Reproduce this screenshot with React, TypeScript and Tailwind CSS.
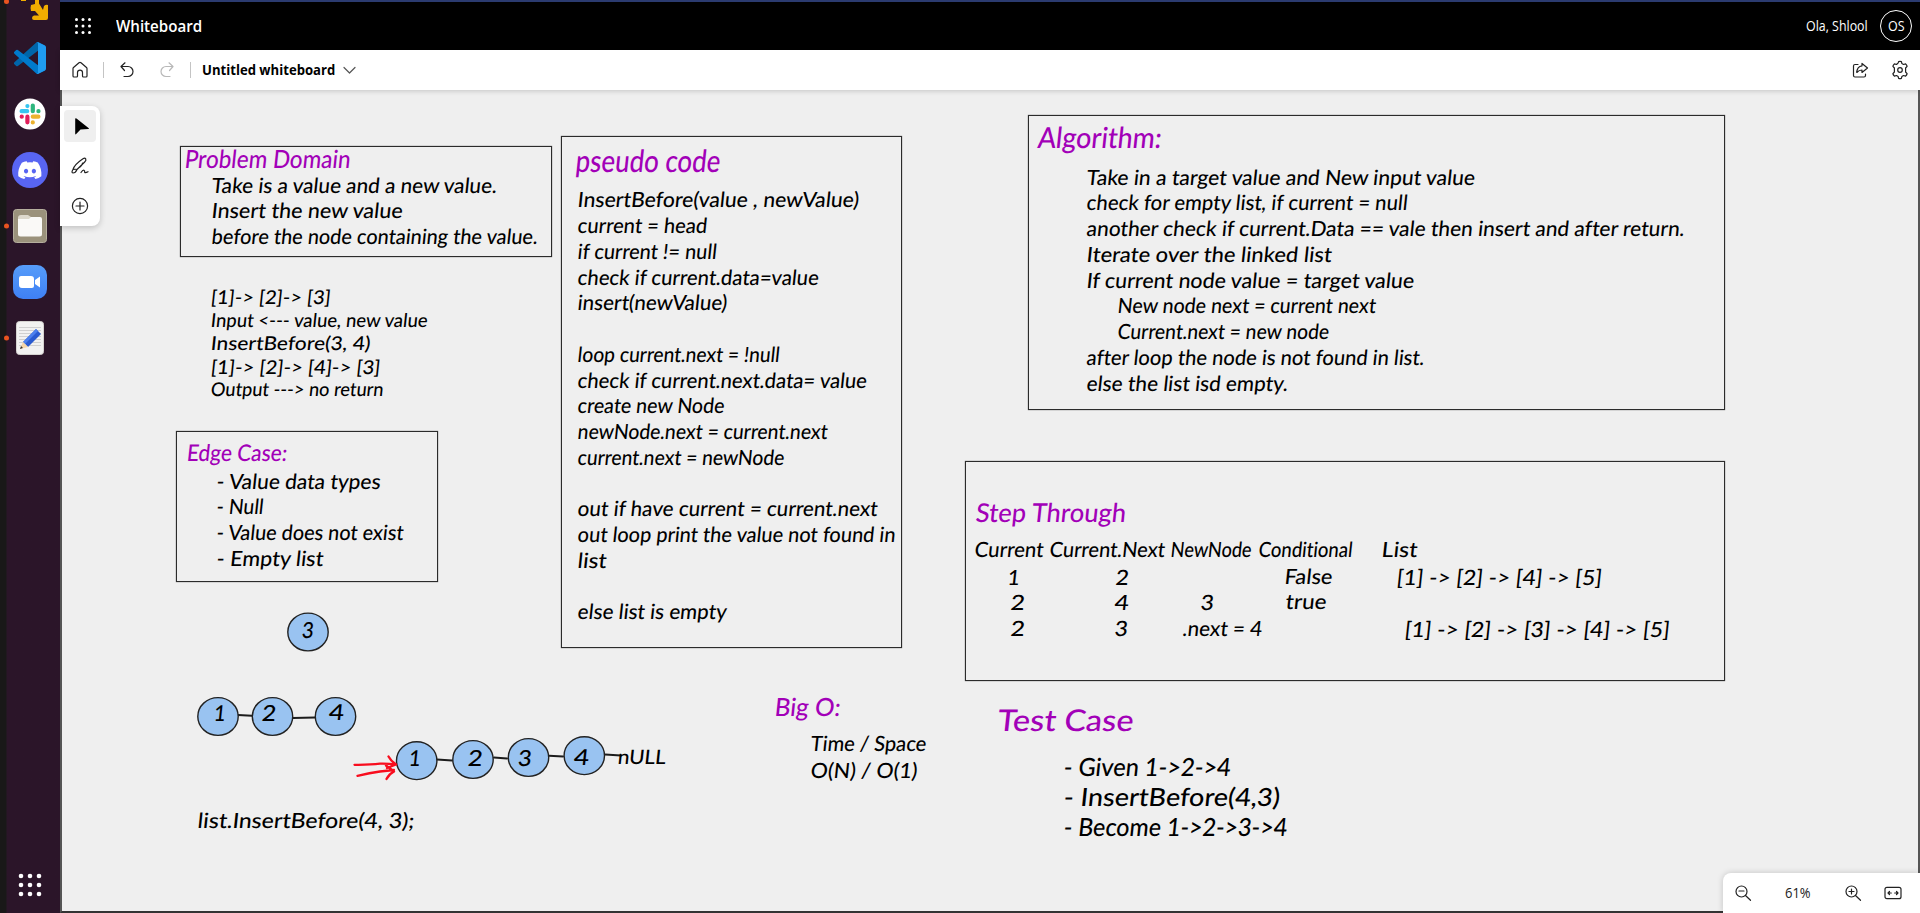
import React, { useLayoutEffect, useRef, useState } from "react";

type FitProps = { text: string; width: number; className?: string };

/* Text stretched horizontally so that it fills an exact width. */
function Fit({ text, width, className = "" }: FitProps) {
  const ref = useRef<HTMLSpanElement>(null);
  const [scale, setScale] = useState(1);
  useLayoutEffect(() => {
    if (ref.current) setScale(width / ref.current.offsetWidth);
  }, [text, width]);
  return (
    <span className={"block " + className} style={{ width }}>
      <span ref={ref} className="inline-block origin-left whitespace-pre" style={{ transform: `scaleX(${scale})` }}>
        {text}
      </span>
    </span>
  );
}

type Note = [text: string, left: number, right: number, baseline: number, size?: number];

const titles: Note[] = [
  ["Problem Domain", 184.5, 350, 168, 25],
  ["pseudo code", 576, 721, 173, 31],
  ["Algorithm:", 1038, 1162, 148.3, 29],
  ["Edge Case:", 187, 287, 461.5, 23],
  ["Step Through", 976, 1126, 522.5, 26],
  ["Big O:", 775, 841, 715.5, 25],
  ["Test Case", 998, 1133.5, 731, 30],
];

const notes: Note[] = [
  ["Take is a value and a new value.", 212, 497, 193],
  ["Insert the new value", 212, 403, 218],
  ["before the node containing the value.", 212, 538, 243.5],
  ["[1]-> [2]-> [3]", 211, 331, 305, 19],
  ["Input <--- value, new value", 211, 428, 328, 19],
  ["InsertBefore(3, 4)", 211, 370, 351, 19],
  ["[1]-> [2]-> [4]-> [3]", 211, 381, 375, 19],
  ["Output ---> no return", 211, 384, 397, 19],
  ["- Value data types", 217, 381, 489],
  ["- Null", 217, 264, 514],
  ["- Value does not exist", 217, 404, 540],
  ["- Empty list", 217, 323.5, 566],
  ["InsertBefore(value , newValue)", 577.5, 859, 207],
  ["current = head", 577.5, 707, 233],
  ["if current != null", 577.5, 717, 259],
  ["check if current.data=value", 577.5, 818.5, 285],
  ["insert(newValue)", 577.5, 727, 310],
  ["loop current.next = !null", 577.5, 779.5, 361.5],
  ["check if current.next.data= value", 577.5, 867, 387.5],
  ["create new Node", 577.5, 724.5, 413],
  ["newNode.next = current.next", 577.5, 827, 439],
  ["current.next = newNode", 577.5, 784.5, 465],
  ["out if have current = current.next", 577.5, 877.5, 516],
  ["out loop print the value not found in", 577.5, 895, 542],
  ["list", 577.5, 606.5, 568],
  ["else list is empty", 577.5, 726.5, 619],
  ["Take in a target value and New input value", 1087, 1475.5, 185],
  ["check for empty list, if current = null", 1086.5, 1407.5, 210],
  ["another check if current.Data == vale then insert and after return.", 1086.5, 1684, 236],
  ["Iterate over the linked list", 1086.5, 1331.5, 262],
  ["If current node value = target value", 1086.5, 1413.5, 288],
  ["New node next = current next", 1117.5, 1375.5, 313],
  ["Current.next = new node", 1117.5, 1328.5, 339],
  ["after loop the node is not found in list.", 1086.5, 1424, 365],
  ["else the list isd empty.", 1086.5, 1288, 391],
  ["Current", 975, 1044, 557],
  ["Current.Next", 1049.5, 1165, 557],
  ["NewNode", 1171, 1252, 557],
  ["Conditional", 1258.5, 1352, 557],
  ["List", 1382, 1418, 557],
  ["1", 1008, 1020, 584.5],
  ["2", 1116, 1129, 584.5],
  ["False", 1284.5, 1332, 583.5],
  ["[1] -> [2] -> [4] -> [5]", 1397, 1602, 584.5],
  ["2", 1011, 1025, 610],
  ["4", 1115, 1129, 610],
  ["3", 1201, 1214, 610],
  ["true", 1286, 1326.5, 609],
  ["2", 1011, 1025, 636],
  ["3", 1115, 1128, 636],
  [".next = 4", 1182.5, 1262, 635.5],
  ["[1] -> [2] -> [3] -> [4] -> [5]", 1405, 1670, 636.5],
  ["Time / Space", 811, 927, 751],
  ["O(N) / O(1)", 811, 918, 778],
  ["- Given 1->2->4", 1064, 1231, 776, 25],
  ["- InsertBefore(4,3)", 1064, 1280.5, 806, 25],
  ["- Become 1->2->3->4", 1064, 1287, 836, 25],
  ["list.InsertBefore(4, 3);", 198, 414.5, 828],
  ["nULL", 618, 666, 764, 20],
  ["3", 302, 314, 638.5, 22],
  ["1", 214, 226, 721.5, 22],
  ["2", 261.5, 276, 722, 22],
  ["4", 328.5, 344, 721, 22],
  ["1", 409, 421, 766.5, 22],
  ["2", 467.5, 482.5, 766.5, 22],
  ["3", 518, 532, 766.5, 22],
  ["4", 573.5, 589, 765.5, 22],
];

const boxes = [
  [180, 146, 372, 111],
  [561, 136, 341, 512],
  [1028, 115, 697, 295],
  [176, 431, 262, 151],
  [965, 461, 760, 220],
];

const nodes = [
  [308, 632], [218, 716.5], [272.5, 716.5], [335.5, 716.5],
  [416.7, 760.7], [473, 759.5], [528.5, 757.5], [584.3, 755.7],
];

function InkText({ note, color }: { note: Note; color: string }) {
  const [text, left, right, baseline, size = 21] = note;
  /* With a line height of 1.2 the baseline falls just under one em below the top. */
  return (
    <div
      className={"absolute -skew-x-6 leading-[1.2] font-medium [font-variant-ligatures:none] " + color}
      style={{ left, top: baseline - size * 0.987, fontSize: size }}
    >
      <Fit text={text} width={right - left} />
    </div>
  );
}

function Board() {
  return (
    <div className="absolute inset-0 font-['Lato',sans-serif]">
      {boxes.map(([left, top, width, height]) => (
        <div key={left} className="absolute border border-[#2b2b2b] shadow-[0_0_1px_#555]" style={{ left, top, width, height }} />
      ))}
      <svg className="absolute top-0 left-0" width="1920" height="913" fill="none">
        <g stroke="#1c1c1c" strokeWidth="2" strokeLinecap="round">
          <path d="M238 715l14 .7M293 718l22-.6M437 759.5l15 1M494 757.6l13 .9M549 755.7l14 .8M605 754.5l16 1" />
        </g>
        {nodes.map(([x, y]) => (
          <ellipse key={x} cx={x} cy={y} rx="20.2" ry="18.9" fill="#99c3f1" stroke="#222" strokeWidth="1.4" />
        ))}
        <path
          d="M354.5 764.8Q370 765 380 763.7Q388 763.5 396 764.5M388.5 756.5Q391 761 396 764.5L387 768M357.5 775.8Q370 773 380 771.5L394 770M386 765.5L394 771.5Q389 774 386.5 779"
          stroke="#f80d1e" strokeWidth="2.3" strokeLinecap="round" strokeLinejoin="round"
        />
      </svg>
      {titles.map((n) => <InkText key={n[0]} note={n} color="text-[#a200b8]" />)}
      {notes.map((n, i) => <InkText key={i} note={n} color="text-black" />)}
    </div>
  );
}

function Dot() {
  return <i className="absolute top-1/2 left-[4px] size-[5px] -translate-y-1/2 rounded-full bg-[#e95420]" />;
}

function Slot({ open, children }: { open?: boolean; children: React.ReactNode }) {
  return (
    <div className="relative flex h-14 w-[60px] shrink-0 items-center justify-center">
      {open && <Dot />}
      {children}
    </div>
  );
}

function Dock() {
  return (
    <aside className="flex h-[913px] w-[60px] shrink-0 flex-col bg-linear-to-r from-[#191818] from-[6px] to-[#2b1529] to-[7px]">
      <div className="relative h-[30px] w-[60px] overflow-hidden">
        <i className="absolute -top-[1px] left-[4px] size-[5px] rounded-full bg-[#e95420]" />
        <svg className="absolute top-0 left-0" width="60" height="30">
          <path d="M21 0h5v1h-5zM35 0h4v3.500L43 10l1-4q2-2 4-1v13q0 2-2 2H34q-2 0-2-2t2-2.500h5L35 11h-4q-1-3 0-6l4-1z" fill="#f0ad00" />
        </svg>
      </div>
      <Slot>
        <svg width="32" height="32" viewBox="0 0 100 100">
          <path d="M96.5 10.8 75.9.9a6.2 6.2 0 0 0-7.1 1.2L1.3 63.6a4.2 4.2 0 0 0 0 6.1l5.5 5a4.2 4.2 0 0 0 5.3.3L93.4 13.4c2.7-2.1 6.6-.1 6.6 3.3v-.2a6.3 6.3 0 0 0-3.5-5.7z" fill="#0065a9" />
          <path d="m96.5 89.2-20.6 9.9a6.2 6.2 0 0 1-7.1-1.2L1.3 36.4a4.2 4.2 0 0 1 0-6.1l5.5-5a4.2 4.2 0 0 1 5.3-.3l81.3 61.6c2.7 2.1 6.6.1 6.6-3.3v.2a6.3 6.3 0 0 1-3.5 5.7z" fill="#007acc" />
          <path d="M75.9 99.1a6.2 6.2 0 0 1-7.1-1.2c2.3 2.3 6.2.7 6.2-2.6V4.7c0-3.3-3.9-4.9-6.2-2.6A6.2 6.2 0 0 1 75.9.9l20.6 9.9a6.3 6.3 0 0 1 3.5 5.7v67a6.3 6.3 0 0 1-3.5 5.7z" fill="#1f9cf0" />
        </svg>
      </Slot>
      <Slot>
        <svg width="32" height="32" viewBox="0 0 32 32">
          <circle cx="16" cy="16" r="15.5" fill="#fff" />
          <g strokeWidth="4.2" strokeLinecap="round">
            <path d="M13.4 8v.1M7.6 13.2h5.6" stroke="#36c5f0" />
            <path d="M18.8 7.6v5.6M24.4 13.2h.1" stroke="#2eb67d" />
            <path d="M18.8 18.7h5.6M18.8 24.4v.1" stroke="#ecb22e" />
            <path d="M13.4 18.7v5.6M7.7 18.7h.1" stroke="#e01e5a" />
          </g>
        </svg>
      </Slot>
      <Slot>
        <svg width="36" height="36" viewBox="0 0 36 36">
          <circle cx="18" cy="18" r="18" fill="#5865f2" />
          <path transform="translate(6.2 6.4) scale(.98)" d="M20.317 4.37a19.8 19.8 0 0 0-4.885-1.515.07.07 0 0 0-.079.037c-.21.375-.444.864-.608 1.25a18.3 18.3 0 0 0-5.487 0 12.6 12.6 0 0 0-.617-1.25.08.08 0 0 0-.079-.037A19.7 19.7 0 0 0 3.677 4.37C.533 9.046-.32 13.58.099 18.057a.08.08 0 0 0 .031.057 19.9 19.9 0 0 0 5.993 3.03 14 14 0 0 0 1.226-1.994 13 13 0 0 1-1.872-.892l.37-.292c3.93 1.79 8.18 1.79 12.06 0l.37.292a12 12 0 0 1-1.873.892c.36.698.772 1.362 1.225 1.993a19.8 19.8 0 0 0 6.002-3.03c.5-5.177-.838-9.674-3.549-13.66zM8.02 15.33c-1.183 0-2.157-1.085-2.157-2.419s.956-2.419 2.157-2.419 2.176 1.096 2.157 2.42c0 1.333-.956 2.418-2.157 2.418zm7.975 0c-1.183 0-2.157-1.085-2.157-2.419s.955-2.419 2.157-2.419 2.176 1.096 2.157 2.42c0 1.333-.946 2.418-2.157 2.418z" fill="#fff" />
        </svg>
      </Slot>
      <Slot open>
        <svg width="34" height="34" viewBox="0 0 34 34">
          <rect x=".5" y=".5" width="33" height="33" rx="3" fill="#9b927c" stroke="#b5ae9d" />
          <path d="M5 9q0-3 3-3h7l3 2v5H5z" fill="#ddd8cc" />
          <path d="M5 10h11l2-2h9q2 0 2 2v15q0 2.500-2.500 2.500h-19Q5 27.500 5 25z" fill="#faf9f7" />
        </svg>
      </Slot>
      <Slot>
        <div className="flex size-[34px] items-center justify-center rounded-[10px] bg-linear-to-b from-[#569cf9] to-[#3f80f5]">
          <svg width="22" height="12" viewBox="0 0 22 12" fill="#fff">
            <path d="M0 2Q0 0 2 0h10q3 0 3 3v7q0 2-2 2H3q-3 0-3-3zM16 4l5-3.600V11.600L16 8z" />
          </svg>
        </div>
      </Slot>
      <Slot open>
        <svg width="28" height="34" viewBox="0 0 28 34">
          <rect x=".5" y=".5" width="27" height="33" rx="3" fill="#f2f2f1" stroke="#d5d3d0" />
          <path d="M3 6.500h22M3 9.500h22M3 12.500h22M3 15.500h22M3 18.500h22M3 21.500h22M3 24.500h22" stroke="#d0d0d0" />
          <path d="M7 21 20 8l5 5-13 13z" fill="#2a5bd0" />
          <path d="M7 21 20 8l2 2L9 23z" fill="#4c80ee" />
          <path d="m7 21 5 5-8 2z" fill="#f5d5a6" />
          <path d="m5 25 2 2-3 1z" fill="#333" />
        </svg>
      </Slot>
      <div className="flex grow items-end justify-center pb-4">
        <svg width="24" height="24" fill="#fff">
          {[3, 12, 21].map((y) => [3, 12, 21].map((x) => <circle key={x + "-" + y} cx={x} cy={y} r="2.300" />))}
        </svg>
      </div>
    </aside>
  );
}

function Line({ d, size = 20, color = "#222", children }: { d: string; size?: number; color?: string; children?: React.ReactNode }) {
  return (
    <svg className="shrink-0" width={size} height={size} viewBox="0 0 20 20" fill="none" stroke={color} strokeWidth="1.2" strokeLinecap="round" strokeLinejoin="round">
      <path d={d} />
      {children}
    </svg>
  );
}

export default function App() {
  return (
    <div className="relative flex h-[913px] w-[1920px] overflow-hidden bg-[#efefef] font-['Open_Sans',sans-serif]">
      <Dock />
      <main className="relative flex grow flex-col">
        <header className="relative z-10 flex h-[50px] shrink-0 items-center border-t-2 border-[#2b3b70] bg-black pl-[15px] text-white">
          <svg width="16" height="16" fill="#fff">
            {[1.5, 8, 14.500].map((y) => [1.5, 8, 14.500].map((x) => <circle key={x + "-" + y} cx={x} cy={y} r="1.500" />))}
          </svg>
          <Fit text="Whiteboard" width={86} className="ml-[25px] text-base font-semibold" />
          <div className="ml-auto flex items-center gap-3 pr-2">
            <Fit text="Ola, Shlool" width={62} className="text-sm" />
            <div className="flex size-8 items-center justify-center rounded-full border border-white">
              <Fit text="OS" width={17} className="text-sm" />
            </div>
          </div>
        </header>
        <nav className="relative z-10 flex h-10 shrink-0 items-center bg-white pl-[10px] shadow-[0_1px_5px_rgba(0,0,0,0.18)]">
          <Line d="M3 8.600q0-.6.5-1.100L9 2.700q1-.8 2 0l5.500 4.800q.5.500.5 1.100V16q0 1-1 1h-2.500q-1 0-1-1v-3.500q0-2.300-2.500-2.300T7.500 12.500V16q0 1-1 1H4q-1 0-1-1z" />
          <i className="ml-[13px] h-4 w-px bg-[#c4c4c4]" />
          <div className="ml-[13px]"><Line d="M8 2.800 4 6.500 7.500 10.500M4.200 6.500H11a5 5 0 0 1 0 10H7" /></div>
          <div className="ml-5"><Line color="#b8b8b8" d="m12 2.800 4 3.700L12.500 10.500M15.800 6.500H9a5 5 0 0 0 0 10h4" /></div>
          <i className="ml-[13px] h-4 w-px bg-[#c4c4c4]" />
          <Fit text="Untitled whiteboard" width={133} className="ml-[11px] text-sm font-bold text-black" />
          <div className="ml-1"><Line color="#555" d="m5 7.500 5.500 5.500L16 7.500" /></div>
          <div className="ml-auto flex items-center gap-5 pr-[10px]">
            <Line d="M8 4.500H5Q3.500 4.500 3.500 6v9.500Q3.500 17 5 17h9q1.500 0 1.500-1.500V14M12 3.500v2.300Q7 6.500 6.800 12.500 9 10 12 10v2.500L17.500 8z" />
            <Line d="M8.200 2.800 8.600 1.600Q10 1.200 11.400 1.600L11.900 3.600 13.500 4.500 15.600 3.900Q16.700 5 17.100 6.300L15.600 8v4l1.500 1.700q-.4 1.300-1.500 2.400l-2.100-.6-1.600.9-.5 2q-1.400.4-2.800 0l-.5-2-1.600-.9-2.100.6Q3.300 15 2.900 13.700L4.400 12V8L2.900 6.300Q3.300 5 4.400 3.900l2.100.6z">
              <circle cx="10" cy="10" r="2.300" />
            </Line>
          </div>
        </nav>
        <div className="flex min-h-0 grow border-r-2 border-b-2 border-l-2 border-r-[#555] border-b-[#333] border-l-[#555]">
          <div className="relative z-10 mt-4 -ml-0.5 flex h-[120px] w-10 flex-col items-center rounded-r-lg bg-white pt-1 shadow-[0_2px_6px_rgba(0,0,0,0.2)]">
            <div className="flex size-8 items-center justify-center rounded bg-[#efefef] pl-[3px]">
              <svg width="14" height="17" viewBox="0 0 14 17"><path d="M.2.8v15q.1 1 1 .3L5.500 11.500l7.700-.4q1.200-.2.300-1L1.500.4Q.3-.2.200.8z" fill="#000" /></svg>
            </div>
            <div className="mt-3.5">
              <Line d="M3 13.500Q4.500 8.500 13 2.800q1.800-1.200 2.700 0 .8 1.500-1 3.200L7 13.500Q5.500 13 3 13.500 1 16.500 3 17q2.500 0 4-3.500M8.500 12Q12.500 9.500 12.500 7M11 16.500q1.700-2.700 3-2.300 1 .4.600 1.800 0 1.400 3.400-.3" />
            </div>
            <div className="mt-[20px]">
              <Line d="M10 6v8M6 10h8"><circle cx="10" cy="10" r="7.600" /></Line>
            </div>
          </div>
        </div>
      </main>
      <div className="pointer-events-none absolute inset-0"><Board /></div>
      <footer className="absolute right-0 bottom-0 z-10 flex h-10 w-[197px] items-center rounded-tl-lg bg-white pl-[10px] text-[#222] shadow-[0_0_6px_rgba(0,0,0,0.18)]">
        <Line d="M6 8h5M12.500 12.500l5 4.800"><circle cx="8.500" cy="8.500" r="5.500" /></Line>
        <Fit text="61%" width={26} className="ml-[32px] text-sm" />
        <div className="ml-[32px]"><Line d="M6 8.500h5M8.500 6v5M12.500 12.500l5 4.800"><circle cx="8.500" cy="8.500" r="5.500" /></Line></div>
        <div className="ml-5">
          <Line d="M4 4.300h12q2 0 2 2v7.400q0 2-2 2H4q-2 0-2-2V6.300q0-2 2-2zM5 10h3.300M6.500 8.500 5 10l1.500 1.500M15 10h-3.300M13.500 8.500 15 10l-1.500 1.500" />
        </div>
      </footer>
    </div>
  );
}
